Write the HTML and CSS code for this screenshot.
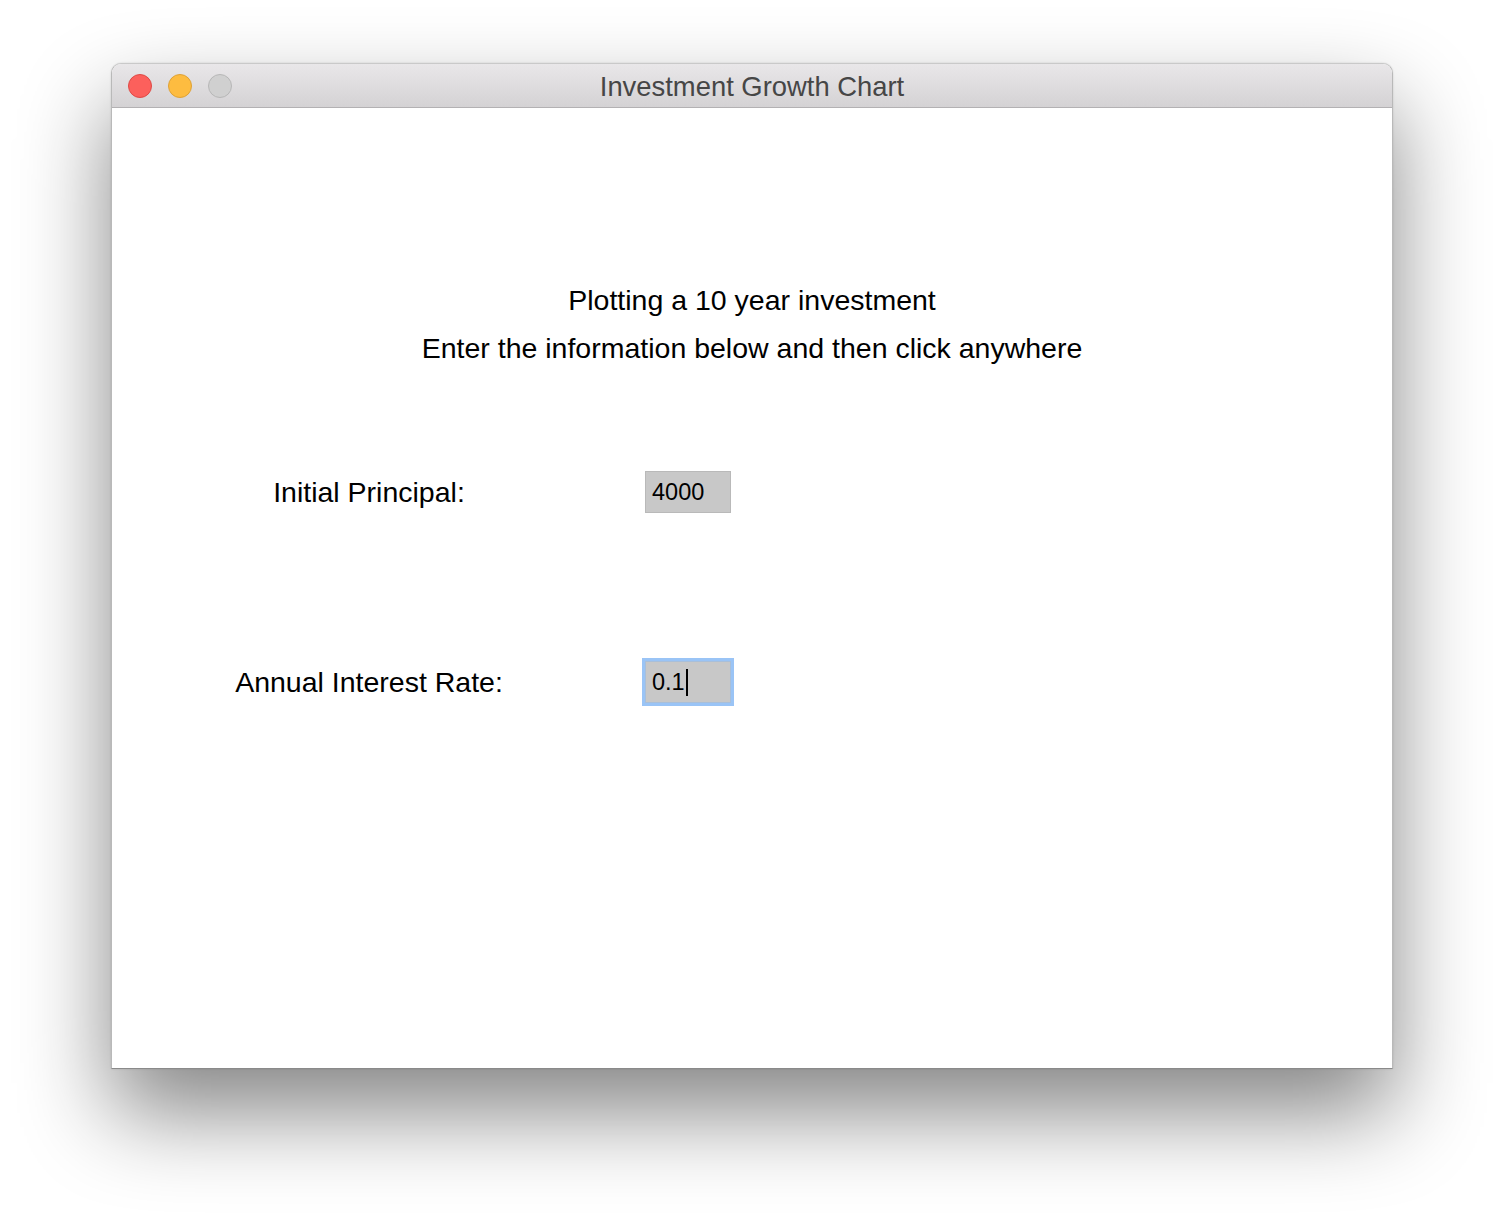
FILE: index.html
```html
<!DOCTYPE html>
<html>
<head>
<meta charset="utf-8">
<title>Investment Growth Chart</title>
<link rel="stylesheet" href="styles.css">
</head>
<body>
<div class="window">
  <div class="titlebar">
    <div class="lights">
      <span class="light red"></span>
      <span class="light yellow"></span>
      <span class="light gray"></span>
    </div>
    <div class="title">Investment Growth Chart</div>
  </div>
  <div class="content">
    <div class="intro">
      <p class="line">Plotting a 10 year investment</p>
      <p class="line">Enter the information below and then click anywhere</p>
    </div>
    <div class="form">
      <div class="row first">
        <div class="label">Initial Principal:</div>
        <div class="field">4000</div>
      </div>
      <div class="row second">
        <div class="label">Annual Interest Rate:</div>
        <div class="field focused">0.1<span class="caret"></span></div>
      </div>
    </div>
  </div>
</div>
</body>
</html>
```

FILE: styles.css
```css
html, body {
  margin: 0;
  padding: 0;
  background: #ffffff;
}

body {
  padding: 63px 0 0 111px;
  min-height: 1228px;
  box-sizing: border-box;
  overflow: hidden;
  font-family: "Liberation Sans", Arial, sans-serif;
}

.window {
  width: 1280px;
  border: 1px solid #b9b9b9;
  border-top-color: #c9c9c9;
  border-bottom-color: #8a8a8a;
  border-radius: 10px 10px 0 0;
  background: #ffffff;
  box-shadow: 0 44px 90px 0 rgba(0, 0, 0, 0.48), 0 0 2px rgba(0,0,0,0.15);
  overflow: hidden;
}

.titlebar {
  height: 43px;
  display: flex;
  align-items: center;
  position: relative;
  background: linear-gradient(#e9e7e9, #d4d2d4);
  border-bottom: 1px solid #b3b1b3;
}

.lights {
  display: flex;
  gap: 16px;
  padding-left: 16px;
  padding-top: 1px;
}

.light {
  width: 22px;
  height: 22px;
  border-radius: 50%;
  border: 1px solid;
}

.red { background: #fc605c; border-color: #de4a46; }
.yellow { background: #fdbc40; border-color: #dea236; }
.gray { background: #d0d0d0; border-color: #b7b7b7; }

.title {
  position: absolute;
  left: 0;
  right: 0;
  top: 2px;
  bottom: 0;
  display: flex;
  align-items: center;
  justify-content: center;
  font-size: 27.4px;
  color: #464646;
  pointer-events: none;
}

.content {
  height: 960px;
  padding-top: 168px;
  box-sizing: border-box;
  color: #000000;
}

.intro {
  text-align: center;
}

.line {
  margin: 0;
  font-size: 28.5px;
  line-height: 48px;
}

.form {
  margin-top: 96px;
  display: flex;
  flex-direction: column;
  gap: 142px;
}

.row {
  display: grid;
  grid-template-columns: 514px auto;
  column-gap: 19px;
  align-items: center;
  height: 48px;
}

.label {
  text-align: center;
  font-size: 28.5px;
}

.field {
  width: 86px;
  height: 42px;
  box-sizing: border-box;
  border: 1px solid #b9b9b9;
  background: #c8c8c8;
  font-size: 23.5px;
  line-height: 40px;
  padding-left: 6px;
  display: flex;
  align-items: center;
}

.field.focused {
  box-shadow: 0 0 0 3px #9ac4f6;
  border-color: #a9bfd9;
}

.caret {
  display: inline-block;
  width: 2px;
  height: 27px;
  margin-left: 1px;
  background: #000000;
}
```
